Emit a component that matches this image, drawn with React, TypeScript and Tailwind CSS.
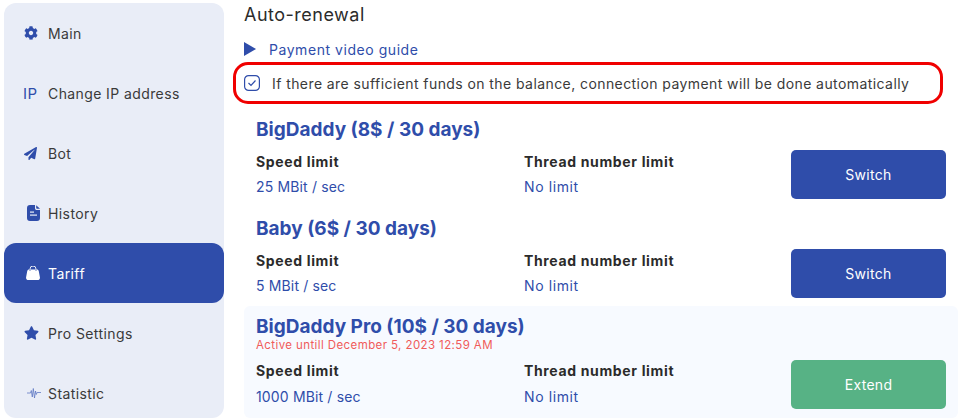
import React from "react";

const blue = "#2f4daa";

const Gear = () => (
  <svg viewBox="0 0 512 512" className="w-[14px] h-[14px] ml-[1px]" fill={blue}>
    <path d="M487.4 315.7l-42.6-24.6c4.3-23.2 4.3-47 0-70.2l42.6-24.6c4.9-2.8 7.1-8.6 5.5-14-11.1-35.6-30-67.8-54.7-94.6-3.8-4.1-10-5.1-14.8-2.3L380.8 110c-17.9-15.4-38.5-27.3-60.8-35.1V25.8c0-5.6-3.900-10.500-9.400-11.700-36.700-8.200-74.300-7.800-109.200 0-5.500 1.200-9.400 6.100-9.400 11.700V75c-22.200 7.900-42.800 19.800-60.800 35.100L88.700 85.500c-4.900-2.800-11-1.900-14.800 2.300-24.700 26.700-43.600 58.900-54.700 94.600-1.700 5.400.6 11.200 5.500 14L67.300 221c-4.300 23.200-4.300 47 0 70.200l-42.600 24.600c-4.900 2.800-7.100 8.600-5.500 14 11.100 35.600 30 67.800 54.700 94.600 3.800 4.100 10 5.100 14.800 2.300l42.600-24.600c17.900 15.400 38.500 27.300 60.800 35.100v49.200c0 5.600 3.900 10.500 9.400 11.700 36.700 8.200 74.300 7.800 109.200 0 5.500-1.200 9.400-6.100 9.400-11.700v-49.200c22.200-7.900 42.800-19.800 60.800-35.100l42.600 24.600c4.900 2.800 11 1.900 14.800-2.300 24.700-26.700 43.600-58.900 54.700-94.600 1.500-5.500-.7-11.300-5.600-14.100zM256 336c-44.100 0-80-35.900-80-80s35.900-80 80-80 80 35.900 80 80-35.900 80-80 80z" />
  </svg>
);
const Plane = () => (
  <svg viewBox="0 0 512 512" className="w-[13px] h-[13px] ml-[1px]" fill={blue}>
    <path d="M476 3.200L12.500 270.600c-18.100 10.400-15.800 35.600 2.200 43.200L121 358.400l287.300-253.200c5.500-4.900 13.300 2.600 8.600 8.300L176 407v80.500c0 23.600 28.500 32.900 42.500 15.800L282 426l124.600 52.200c14.200 6 30.400-2.900 33-18.200l72-432C515 7.800 493.300-6.800 476 3.200z" />
  </svg>
);
const Doc = () => (
  <svg viewBox="0 0 13 16" className="w-[13px] h-[16px] ml-[4px]" fill={blue}>
    <path d="M3 0h5v3.200c0 1 .8 1.800 1.800 1.800H13v8a3 3 0 0 1-3 3H3a3 3 0 0 1-3-3V3a3 3 0 0 1 3-3z" />
    <path d="M9.200 0.200L13 3.800H10a.8.8 0 0 1-.8-.8z" />
    <rect x="3" y="6.500" width="4" height="1.200" fill="#e9edf7" />
    <rect x="3" y="9.500" width="7" height="1.200" fill="#e9edf7" />
  </svg>
);
const Bag = () => (
  <svg viewBox="0 0 14 14" className="w-[14px] h-[14px] ml-[3px]" fill="#fff">
    <path d="M4 5V3a3 3 0 0 1 6 0v2" fill="none" stroke="#fff" strokeWidth="0.9" />
    <path d="M3.200 3.500h7.600c1 0 1.800.7 2 1.700l1.100 6c.3 1.500-.8 2.800-2.300 2.800H2.400C.9 14-.2 12.700.1 11.200l1.100-6c.2-1 1-1.700 2-1.700z" />
    <path d="M4 5V3.500M10 5V3.500" fill="none" stroke="#2f4daa" strokeWidth="0.7" />
  </svg>
);
const Star = () => (
  <svg viewBox="0 0 576 512" className="w-[15px] h-[14px] ml-[1px]" fill={blue}>
    <path d="M259.300 17.800L194 150.200 47.900 171.500c-26.200 3.800-36.700 36.100-17.700 54.600l105.700 103-25 145.500c-4.500 26.300 23.200 46 46.400 33.700L288 439.600l130.700 68.700c23.200 12.200 50.900-7.400 46.400-33.700l-25-145.500 105.700-103c19-18.500 8.500-50.800-17.700-54.600L382 150.200 316.700 17.800c-11.700-23.600-45.600-23.900-57.400 0z" />
  </svg>
);
const Pulse = () => (
  <svg viewBox="0 0 14 12" className="w-[14px] h-[12px] ml-[4px]" fill="none" stroke="#5f78c4" strokeWidth="0.8">
    <path d="M0 6h3.500l.8-2.500L5.300 10 6.300 1.500 7.500 11l1-7 .8 3.500.8-2H14" />
  </svg>
);

const nav: { label: string; icon: React.ReactNode; active?: boolean }[] = [
  { label: "Main", icon: <Gear /> },
  { label: "Change IP address", icon: <span className="text-[15px] text-[#2f4daa] leading-none tracking-[0.5px]">IP</span> },
  { label: "Bot", icon: <Plane /> },
  { label: "History", icon: <Doc /> },
  { label: "Tariff", icon: <Bag />, active: true },
  { label: "Pro Settings", icon: <Star /> },
  { label: "Statistic", icon: <Pulse /> },
];

function Plan(props: { title: string; speed: string; note?: string; action: string; green?: boolean; first?: boolean }) {
  return (
    <div
      className={
        props.green
          ? "bg-[#f7faff] rounded-[6px] px-3 pt-[9px] h-[112px]"
          : "px-3 " + (props.first ? "h-[99px]" : "h-[89px]")
      }
    >
      <div className="text-[19px] leading-[24px] font-bold text-[#2f4daa]">{props.title}</div>
      {props.note && <div className="text-[11.500px] leading-[14px] tracking-[0.4px] text-[#f05a5a] -mt-[1px]">{props.note}</div>}
      <div className={"flex items-start " + (props.note ? "mt-[4px]" : "mt-[5px]")}>
        <div className="w-[268px]">
          <div className="text-[14px] leading-[18px] font-bold tracking-[0.65px] text-[#2b2b2b] mt-[6px]">Speed limit</div>
          <div className={"text-[14px] leading-[18px] tracking-[0.15px] text-[#2f4daa] " + (props.note ? "mt-[8px]" : "mt-[7px]")}>{props.speed}</div>
        </div>
        <div className="flex-1">
          <div className="text-[14px] leading-[18px] font-bold tracking-[0.65px] text-[#2b2b2b] mt-[6px]">Thread number limit</div>
          <div className={"text-[14px] leading-[18px] tracking-[0.6px] text-[#2f4daa] " + (props.note ? "mt-[8px]" : "mt-[7px]")}>No limit</div>
        </div>
        <button className={"w-[155px] h-[49px] rounded-[5px] text-white text-[14px] tracking-[0.3px] " + (props.green ? "mt-[4px] bg-[#57b285]" : "mt-[3px] bg-[#2f4daa]")}>
          {props.action}
        </button>
      </div>
    </div>
  );
}

export default function App() {
  return (
    <div className="w-[958px] h-[418px] overflow-hidden bg-white flex font-['Inter','Liberation_Sans',sans-serif]">
      <aside className="w-[220px] h-[415px] mt-[3px] ml-[4px] bg-[#e9edf7] rounded-[12px] shrink-0 flex flex-col">
        {nav.map((n) => (
          <div
            key={n.label}
            className={"h-[60px] shrink-0 flex items-center rounded-[12px] text-[14px] tracking-[0.4px] " + (n.active ? "bg-[#2f4daa] text-white" : "text-[#3a3a3a]")}
          >
            <span className="w-[44px] pl-[19px] flex justify-start items-center">{n.icon}</span>
            {n.label}
          </div>
        ))}
      </aside>
      <main className="ml-[20px] flex-1 flex flex-col">
        <h1 className="text-[18px] leading-[24px] tracking-[0.5px] text-[#2b2b2b] mt-[3px]">Auto-renewal</h1>
        <div className="flex items-center mt-[13px] h-[18px] text-[14px] tracking-[0.55px] text-[#2f4daa]">
          <svg viewBox="0 0 12 14" className="w-[12px] h-[14px]" fill={blue}><path d="M0 0l12 7-12 7z" /></svg>
          <span className="ml-[13px]">Payment video guide</span>
        </div>
        <div className="mt-[4px] -ml-[11px] w-[710px] h-[43px] border-[3px] border-[#f00000] rounded-[15px] flex items-center pl-[8px] text-[14px] tracking-[0.42px] text-[#3a3a3a]">
          <svg viewBox="0 0 16 16" className="w-[16px] h-[16px] shrink-0" fill="none" stroke={blue} strokeWidth="1.200">
            <rect x="0.600" y="0.600" width="14.800" height="14.800" rx="4" />
            <path d="M4.500 8l2.500 2.500 4.500-5" />
          </svg>
          <span className="ml-[12px] whitespace-nowrap">If there are sufficient funds on the balance, connection payment will be done automatically</span>
        </div>
        <div className="mt-[14px] flex flex-col">
          <Plan title="BigDaddy (8$ / 30 days)" speed="25 MBit / sec" action="Switch" first />
          <Plan title="Baby (6$ / 30 days)" speed="5 MBit / sec" action="Switch" />
          <Plan title="BigDaddy Pro (10$ / 30 days)" speed="1000 MBit / sec" note="Active untill December 5, 2023 12:59 AM" action="Extend" green />
        </div>
      </main>
    </div>
  );
}
